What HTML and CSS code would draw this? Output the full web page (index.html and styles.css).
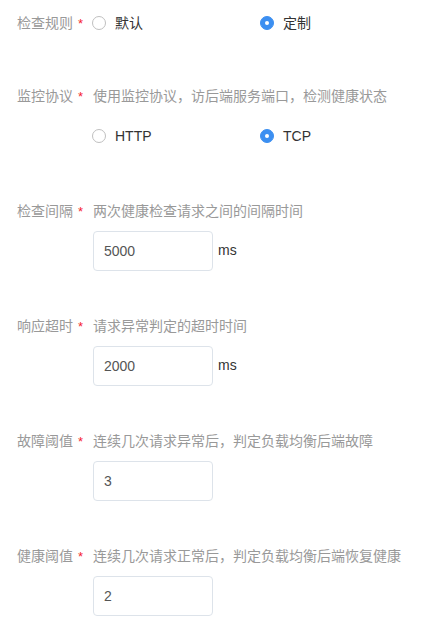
FILE: index.html
```html
<!DOCTYPE html>
<html lang="zh-CN">
<head>
<meta charset="utf-8">
<title>健康检查</title>
<link rel="stylesheet" href="styles.css">
</head>
<body>
<div class="form">
  <div class="item inline">
    <div class="label">检查规则<span class="req">*</span></div>
    <div class="radios">
      <label class="radio"><span class="circle"></span><span class="rtext">默认</span></label>
      <label class="radio checked"><span class="circle"></span><span class="rtext">定制</span></label>
    </div>
  </div>

  <div class="item">
    <div class="label">监控协议<span class="req">*</span></div>
    <div class="desc">使用监控协议，访后端服务端口，检测健康状态</div>
    <div class="control radios">
      <label class="radio"><span class="circle"></span><span class="rtext">HTTP</span></label>
      <label class="radio checked"><span class="circle"></span><span class="rtext">TCP</span></label>
    </div>
  </div>

  <div class="item">
    <div class="label">检查间隔<span class="req">*</span></div>
    <div class="desc">两次健康检查请求之间的间隔时间</div>
    <div class="control">
      <input class="input" type="text" value="5000"><span class="unit">ms</span>
    </div>
  </div>

  <div class="item">
    <div class="label">响应超时<span class="req">*</span></div>
    <div class="desc">请求异常判定的超时时间</div>
    <div class="control">
      <input class="input" type="text" value="2000"><span class="unit">ms</span>
    </div>
  </div>

  <div class="item">
    <div class="label">故障阈值<span class="req">*</span></div>
    <div class="desc">连续几次请求异常后，判定负载均衡后端故障</div>
    <div class="control">
      <input class="input" type="text" value="3">
    </div>
  </div>

  <div class="item">
    <div class="label">健康阈值<span class="req">*</span></div>
    <div class="desc">连续几次请求正常后，判定负载均衡后端恢复健康</div>
    <div class="control">
      <input class="input" type="text" value="2">
    </div>
  </div>
</div>
</body>
</html>
```

FILE: styles.css
```css
html, body {
  margin: 0;
  padding: 0;
  background: #ffffff;
}

body {
  font-family: "Liberation Sans", "Noto Sans CJK SC", sans-serif;
  font-size: 14px;
  line-height: 20px;
  color: #333333;
}

.form {
  padding: 3px 0 0 17px;
}

.item {
  display: grid;
  grid-template-columns: 76px 1fr;
  grid-template-rows: 20px 40px;
  row-gap: 10px;
  margin-bottom: 45px;
}

.item:last-child {
  margin-bottom: 0;
}

.item.inline {
  grid-template-rows: 40px;
  align-items: center;
  margin-bottom: 43px;
}

.label {
  grid-column: 1;
  height: 20px;
  line-height: 20px;
  color: #999999;
  white-space: nowrap;
}

.req {
  color: #f5222d;
  font-size: 13px;
  line-height: 20px;
  margin-left: 5px;
  vertical-align: top;
  position: relative;
  top: 1px;
}

.desc {
  grid-column: 2;
  height: 20px;
  line-height: 20px;
  color: #999999;
  white-space: nowrap;
}

.control {
  grid-column: 2;
  height: 40px;
  display: flex;
  align-items: center;
}

.radios {
  display: flex;
  align-items: center;
  margin-left: -1px;
}

.radio {
  display: flex;
  align-items: center;
  width: 168px;
  height: 20px;
  color: #333333;
}

.circle {
  box-sizing: border-box;
  width: 14px;
  height: 14px;
  border-radius: 50%;
  border: 1px solid #bfbfbf;
  background: #ffffff;
  margin-right: 9px;
  position: relative;
}

.radio.checked .circle {
  border-color: #3c8ff1;
  background: #3c8ff1;
}

.radio.checked .circle::after {
  content: "";
  position: absolute;
  left: 4px;
  top: 4px;
  width: 4px;
  height: 4px;
  border-radius: 50%;
  background: #ffffff;
}

.input {
  box-sizing: border-box;
  width: 120px;
  height: 40px;
  border: 1px solid #dde3ea;
  border-radius: 4px;
  padding: 0 10px;
  font-family: "Liberation Sans", "Noto Sans CJK SC", sans-serif;
  font-size: 14px;
  color: #555555;
  background: #ffffff;
  outline: none;
}

.unit {
  margin-left: 5px;
  color: #333333;
  position: relative;
  top: -1px;
}
```
